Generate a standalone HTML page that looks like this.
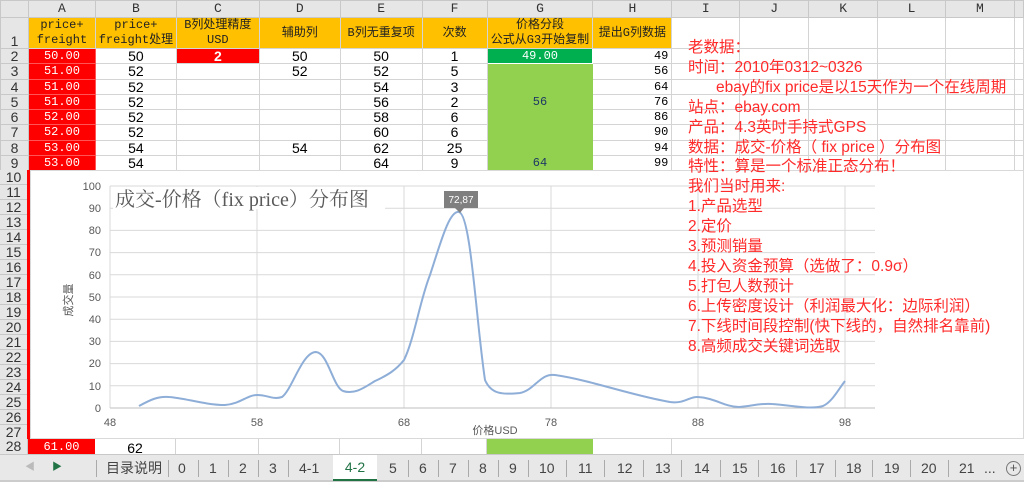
<!DOCTYPE html>
<html><head><meta charset="utf-8"><style>
*{margin:0;padding:0;box-sizing:border-box}
body{width:1024px;height:482px;overflow:hidden;background:#fff;position:relative;font-family:"Liberation Sans","Noto Sans CJK SC",sans-serif}
table{position:absolute;left:0;top:0;border-collapse:collapse;table-layout:fixed}
td{border:1px solid #d4d4d4;font-size:14px;text-align:center;overflow:hidden;white-space:nowrap;padding:0;line-height:14px}
.ch td{background:#e6e6e6;color:#333;font-family:"Liberation Mono","Noto Sans CJK SC",monospace;font-size:13px;height:17px;border-color:#c8c8c8}
td.rh{background:#e6e6e6;color:#333;font-size:14px;border-color:#c8c8c8}
.r1 td.o{background:#ffc000;font-family:"Liberation Mono","Noto Sans CJK SC",monospace;font-size:12px;line-height:15px;color:#222;white-space:normal}
td.a{background:#f00;color:#fff;font-family:"Liberation Mono",monospace;font-size:12px;border-color:#f55}
td.g{background:#92d050;border-color:#92d050;color:#1f3864;font-family:"Liberation Mono",monospace;font-size:12px}
td.h{text-align:right;font-family:"Liberation Mono",monospace;font-size:12px;padding-right:3px}
.rows td{height:15.25px}
#chart{position:absolute;left:30px;top:170px;width:994px;height:269px;background:#fff;border:1px solid #d9d9d9}
#rh2{position:absolute;left:0;top:170px;width:28px}
#rh2 div{height:15px;background:#e6e6e6;border-bottom:1px solid #c8c8c8;border-right:1px solid #c8c8c8;font-size:14px;text-align:center;line-height:15px;color:#333}
#red{position:absolute;left:27px;top:170px;width:3px;height:270px;background:#f00}
#notes{position:absolute;left:688px;top:38px;color:#ff2a2a;font-size:15.5px;line-height:19.9px;font-family:"Liberation Sans","Noto Sans CJK SC",sans-serif}
#tabs{position:absolute;left:0;top:454px;width:1024px;height:28px;background:#e8e8e8;border-top:1px solid #c8c8c8;border-bottom:2px solid #ccc}
#tabs span{position:absolute;top:3px;font-size:14px;color:#444;height:22px;line-height:20px}
#tabs i{position:absolute;top:5px;width:1px;height:17px;background:#aaa}
</style></head><body>
<table>
<colgroup><col style="width:28px"><col style="width:67px"><col style="width:81px"><col style="width:83px"><col style="width:81px"><col style="width:82px"><col style="width:65px"><col style="width:106px"><col style="width:79px"><col style="width:68px"><col style="width:69px"><col style="width:69px"><col style="width:68px"><col style="width:69px"><col style="width:9px"></colgroup>
<tr class="ch"><td></td><td>A</td><td>B</td><td>C</td><td>D</td><td>E</td><td>F</td><td>G</td><td>H</td><td>I</td><td>J</td><td>K</td><td>L</td><td>M</td><td></td></tr>
<tr class="r1" style="height:31px"><td class="rh" style="vertical-align:bottom">1</td><td class="o">price+<br>freight</td><td class="o">price+<br>freight处理</td><td class="o">B列处理精度<br>USD</td><td class="o">辅助列</td><td class="o">B列无重复项</td><td class="o">次数</td><td class="o">价格分段<br>公式从G3开始复制</td><td class="o">提出G列数据</td><td></td><td></td><td></td><td></td><td></td><td></td></tr>
<tbody class="rows">
<tr><td class="rh">2</td><td class="a">50.00</td><td>50</td><td style="background:#f00;color:#fff;font-weight:bold">2</td><td>50</td><td>50</td><td>1</td><td style="background:#00b050;color:#fff;font-family:'Liberation Mono',monospace;font-size:12px;border:1px solid #fff">49.00</td><td class="h">49</td><td></td><td></td><td></td><td></td><td></td><td></td></tr>
<tr><td class="rh">3</td><td class="a">51.00</td><td>52</td><td></td><td>52</td><td>52</td><td>5</td><td class="g"></td><td class="h">56</td><td></td><td></td><td></td><td></td><td></td><td></td></tr>
<tr style="border-bottom:1px solid #888"><td class="rh">4</td><td class="a">51.00</td><td>52</td><td></td><td></td><td>54</td><td>3</td><td class="g"></td><td class="h">64</td><td></td><td></td><td></td><td></td><td></td><td></td></tr>
<tr><td class="rh">5</td><td class="a">51.00</td><td>52</td><td></td><td></td><td>56</td><td>2</td><td class="g">56</td><td class="h">76</td><td></td><td></td><td></td><td></td><td></td><td></td></tr>
<tr><td class="rh">6</td><td class="a">52.00</td><td>52</td><td></td><td></td><td>58</td><td>6</td><td class="g"></td><td class="h">86</td><td></td><td></td><td></td><td></td><td></td><td></td></tr>
<tr><td class="rh">7</td><td class="a">52.00</td><td>52</td><td></td><td></td><td>60</td><td>6</td><td class="g"></td><td class="h">90</td><td></td><td></td><td></td><td></td><td></td><td></td></tr>
<tr><td class="rh">8</td><td class="a">53.00</td><td>54</td><td></td><td>54</td><td>62</td><td>25</td><td class="g"></td><td class="h">94</td><td></td><td></td><td></td><td></td><td></td><td></td></tr>
<tr><td class="rh">9</td><td class="a">53.00</td><td>54</td><td></td><td></td><td>64</td><td>9</td><td class="g">64</td><td class="h">99</td><td></td><td></td><td></td><td></td><td></td><td></td></tr>
</tbody></table>

<div id="rh2">
<div>10</div><div>11</div><div>12</div><div>13</div><div>14</div><div>15</div><div>16</div><div>17</div><div>18</div><div>19</div><div>20</div><div>21</div><div>22</div><div>23</div><div>24</div><div>25</div><div>26</div><div>27</div>
</div>
<div id="red"></div>

<div style="position:absolute;left:0;top:439px;width:1024px;height:15px">
<div style="position:absolute;left:0;top:0;width:28px;height:15px;background:#e6e6e6;border-right:1px solid #c8c8c8;font-size:14px;text-align:center;line-height:15px;color:#333">28</div>
<div style="position:absolute;left:28px;top:0;width:67px;height:15px;background:#f00;color:#fff;font-family:'Liberation Mono',monospace;font-size:12px;text-align:center;line-height:17px">61.00</div>
<div style="position:absolute;left:95px;top:0;width:81px;height:15px;border-right:1px solid #d4d4d4;font-size:14px;text-align:center;line-height:18px">62</div>
<div style="position:absolute;left:176px;top:0;width:83px;height:15px;border-right:1px solid #d4d4d4"></div>
<div style="position:absolute;left:259px;top:0;width:81px;height:15px;border-right:1px solid #d4d4d4"></div>
<div style="position:absolute;left:340px;top:0;width:82px;height:15px;border-right:1px solid #d4d4d4"></div>
<div style="position:absolute;left:422px;top:0;width:65px;height:15px;border-right:1px solid #d4d4d4"></div>
<div style="position:absolute;left:487px;top:0;width:106px;height:15px;background:#92d050"></div>
<div style="position:absolute;left:593px;top:0;width:79px;height:15px;border-right:1px solid #d4d4d4"></div>
</div>

<div id="chart"></div>
<svg style="position:absolute;left:0;top:0" width="1024" height="482" viewBox="0 0 1024 482">
<g stroke="#d9d9d9" stroke-width="1">
<line x1="110" y1="186" x2="875" y2="186"/><line x1="110" y1="208.2" x2="875" y2="208.2"/><line x1="110" y1="230.4" x2="875" y2="230.4"/><line x1="110" y1="252.6" x2="875" y2="252.6"/><line x1="110" y1="274.8" x2="875" y2="274.8"/><line x1="110" y1="297" x2="875" y2="297"/><line x1="110" y1="319.2" x2="875" y2="319.2"/><line x1="110" y1="341.4" x2="875" y2="341.4"/><line x1="110" y1="363.6" x2="875" y2="363.6"/><line x1="110" y1="385.8" x2="875" y2="385.8"/>
<line x1="110" y1="186" x2="110" y2="408"/><line x1="257" y1="186" x2="257" y2="408"/><line x1="404" y1="186" x2="404" y2="408"/><line x1="551" y1="186" x2="551" y2="408"/><line x1="698" y1="186" x2="698" y2="408"/><line x1="845" y1="186" x2="845" y2="408"/>
</g>
<line x1="110" y1="408" x2="875" y2="408" stroke="#bfbfbf"/>
<rect x="113" y="187" width="272" height="22" fill="#fff"/>
<text x="115" y="206" font-family="Liberation Serif,Noto Serif CJK SC,serif" font-size="20" fill="#595959">成交-价格（fix price）分布图</text>
<g font-family="Liberation Sans,sans-serif" font-size="11" fill="#595959" text-anchor="end">
<text x="101" y="190">100</text><text x="101" y="212">90</text><text x="101" y="234">80</text><text x="101" y="256">70</text><text x="101" y="279">60</text><text x="101" y="301">50</text><text x="101" y="323">40</text><text x="101" y="345">30</text><text x="101" y="367">20</text><text x="101" y="390">10</text><text x="101" y="412">0</text>
</g>
<g font-family="Liberation Sans,sans-serif" font-size="11" fill="#595959" text-anchor="middle">
<text x="110" y="426">48</text><text x="257" y="426">58</text><text x="404" y="426">68</text><text x="551" y="426">78</text><text x="698" y="426">88</text><text x="845" y="426">98</text>
</g>
<text x="495" y="434" font-family="Liberation Sans,Noto Sans CJK SC,sans-serif" font-size="11" fill="#595959" text-anchor="middle">价格USD</text>
<text transform="translate(72,300) rotate(-90)" font-family="Liberation Sans,Noto Sans CJK SC,sans-serif" font-size="11" fill="#595959" text-anchor="middle">成交量</text>
<path d="M139,406 C150,400 158,396 169,397 C185,398 205,405 225,405 C240,404 247,395 257,395 C268,395 273,400 282,397 C292,390 302,352 316,352 C328,353 333,387 343,391 C355,395 365,387 375,381 C388,375 396,370 404,360 C414,340 420,300 430,275 C440,245 449,210 459,212 C471,215 476,320 485,380 C492,396 505,394 520,393 C535,390 540,373 555,375 C590,380 630,395 670,402 C685,404 690,396 698,397 C715,398 725,407 739,407 C752,406 760,403 772,404 C790,405 810,410 823,406 C832,402 838,390 845,381" fill="none" stroke="#8eaed8" stroke-width="2"/>
<rect x="444" y="191" width="34" height="17" fill="#7f7f7f"/>
<path d="M455,208 L460,213 L464,208Z" fill="#7f7f7f"/>
<text x="461" y="203" font-family="Liberation Sans,sans-serif" font-size="10" fill="#fff" text-anchor="middle">72,87</text>
</svg>

<div id="notes">
老数据：<br>时间：2010年0312~0326<br><span style="padding-left:28px">ebay的fix price是以15天作为一个在线周期</span><br>站点：ebay.com<br>产品：4.3英吋手持式GPS<br>数据：成交-价格（ fix price ）分布图<br>特性：算是一个标准正态分布！<br>我们当时用来:<br>1.产品选型<br>2.定价<br>3.预测销量<br>4.投入资金预算（选做了：0.9σ）<br>5.打包人数预计<br>6.上传密度设计（利润最大化：边际利润）<br>7.下线时间段控制(快下线的，自然排名靠前)<br>8.高频成交关键词选取
</div>

<div id="tabs">
<span style="left:25px;color:#bbb;font-size:10px">◀</span>
<span style="left:52px;color:#217346;font-size:10px">▶</span>
<i style="left:96px"></i>
<span style="left:106px">目录说明</span><i style="left:168px"></i>
<span style="left:178px">0</span><i style="left:198px"></i>
<span style="left:209px">1</span><i style="left:228px"></i>
<span style="left:239px">2</span><i style="left:258px"></i>
<span style="left:269px">3</span><i style="left:288px"></i>
<span style="left:299px">4-1</span>
<span style="left:333px;top:0;width:44px;height:26px;background:#fff;border-bottom:2px solid #217346;color:#217346;text-align:center;line-height:24px">4-2</span>
<span style="left:389px">5</span><i style="left:408px"></i>
<span style="left:419px">6</span><i style="left:438px"></i>
<span style="left:449px">7</span><i style="left:468px"></i>
<span style="left:479px">8</span><i style="left:498px"></i>
<span style="left:509px">9</span><i style="left:528px"></i>
<span style="left:539px">10</span><i style="left:566px"></i>
<span style="left:578px">11</span><i style="left:604px"></i>
<span style="left:617px">12</span><i style="left:643px"></i>
<span style="left:655px">13</span><i style="left:681px"></i>
<span style="left:694px">14</span><i style="left:720px"></i>
<span style="left:732px">15</span><i style="left:758px"></i>
<span style="left:770px">16</span><i style="left:796px"></i>
<span style="left:809px">17</span><i style="left:835px"></i>
<span style="left:846px">18</span><i style="left:872px"></i>
<span style="left:884px">19</span><i style="left:910px"></i>
<span style="left:921px">20</span><i style="left:948px"></i>
<span style="left:959px">21</span>
<span style="left:984px">...</span>
<span style="left:1006px;width:15px;height:15px;top:6px;border:1px solid #777;border-radius:50%;line-height:12px;text-align:center;font-size:13px;color:#555">+</span>
</div>
</body></html>
